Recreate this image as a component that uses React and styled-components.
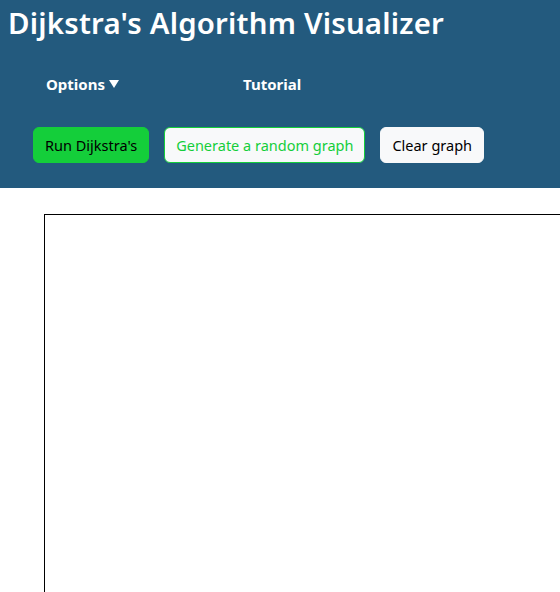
import React from "react";
import styled, { createGlobalStyle } from "styled-components";

const Global = createGlobalStyle`
  html, body { margin: 0; padding: 0; overflow: hidden; background: #fff; }
  body { font-family: "Noto Sans", "Open Sans", sans-serif; }
`;

const Header = styled.header`
  background: #235a7e;
  height: 188px;
  display: flex;
  flex-direction: column;
  box-sizing: border-box;
`;

const Title = styled.h1`
  margin: 0;
  padding: 3px 0 0 8px;
  color: #fff;
  font-size: 29.4px;
  font-weight: 600;
  line-height: 40px;
  letter-spacing: 0.2px;
`;

const Nav = styled.nav`
  display: flex;
  margin-top: 26px;
  padding-left: 46px;
  height: 30px;
  align-items: center;
`;

const NavItem = styled.span`
  color: #fff;
  font-weight: 700;
  font-size: 15px;
  width: ${(p) => p.$w}px;
  display: flex;
  align-items: center;
  gap: 4px;
`;

const Actions = styled.div`
  display: flex;
  gap: 15px;
  padding-left: 33px;
  margin-top: 28px;
`;

const Button = styled.button`
  font-family: inherit;
  font-size: 14.5px;
  height: 36px;
  padding: 0 11px;
  border-radius: 6px;
  cursor: pointer;
  background: ${(p) => (p.$variant === "primary" ? "#14ce3a" : "#f8f9fa")};
  color: ${(p) => (p.$variant === "outline" ? "#14ce3a" : "#000")};
  border: 1px solid
    ${(p) => (p.$variant === "plain" ? "#f8f9fa" : "#14ce3a")};
`;

const Board = styled.div`
  margin: 26px 0 0 44px;
  width: 1000px;
  height: 600px;
  border: 1px solid #000;
  box-sizing: border-box;
`;

export default function App() {
  return (
    <>
      <Global />
      <Header>
        <Title>Dijkstra's Algorithm Visualizer</Title>
        <Nav>
          <NavItem $w={197}>
            Options
            <svg width="10" height="8" viewBox="0 0 10 8">
              <path d="M0 0 H10 L5 8 Z" fill="#fff" />
            </svg>
          </NavItem>
          <NavItem $w={100}>Tutorial</NavItem>
        </Nav>
        <Actions>
          <Button $variant="primary">Run Dijkstra's</Button>
          <Button $variant="outline">Generate a random graph</Button>
          <Button $variant="plain">Clear graph</Button>
        </Actions>
      </Header>
      <Board />
    </>
  );
}
